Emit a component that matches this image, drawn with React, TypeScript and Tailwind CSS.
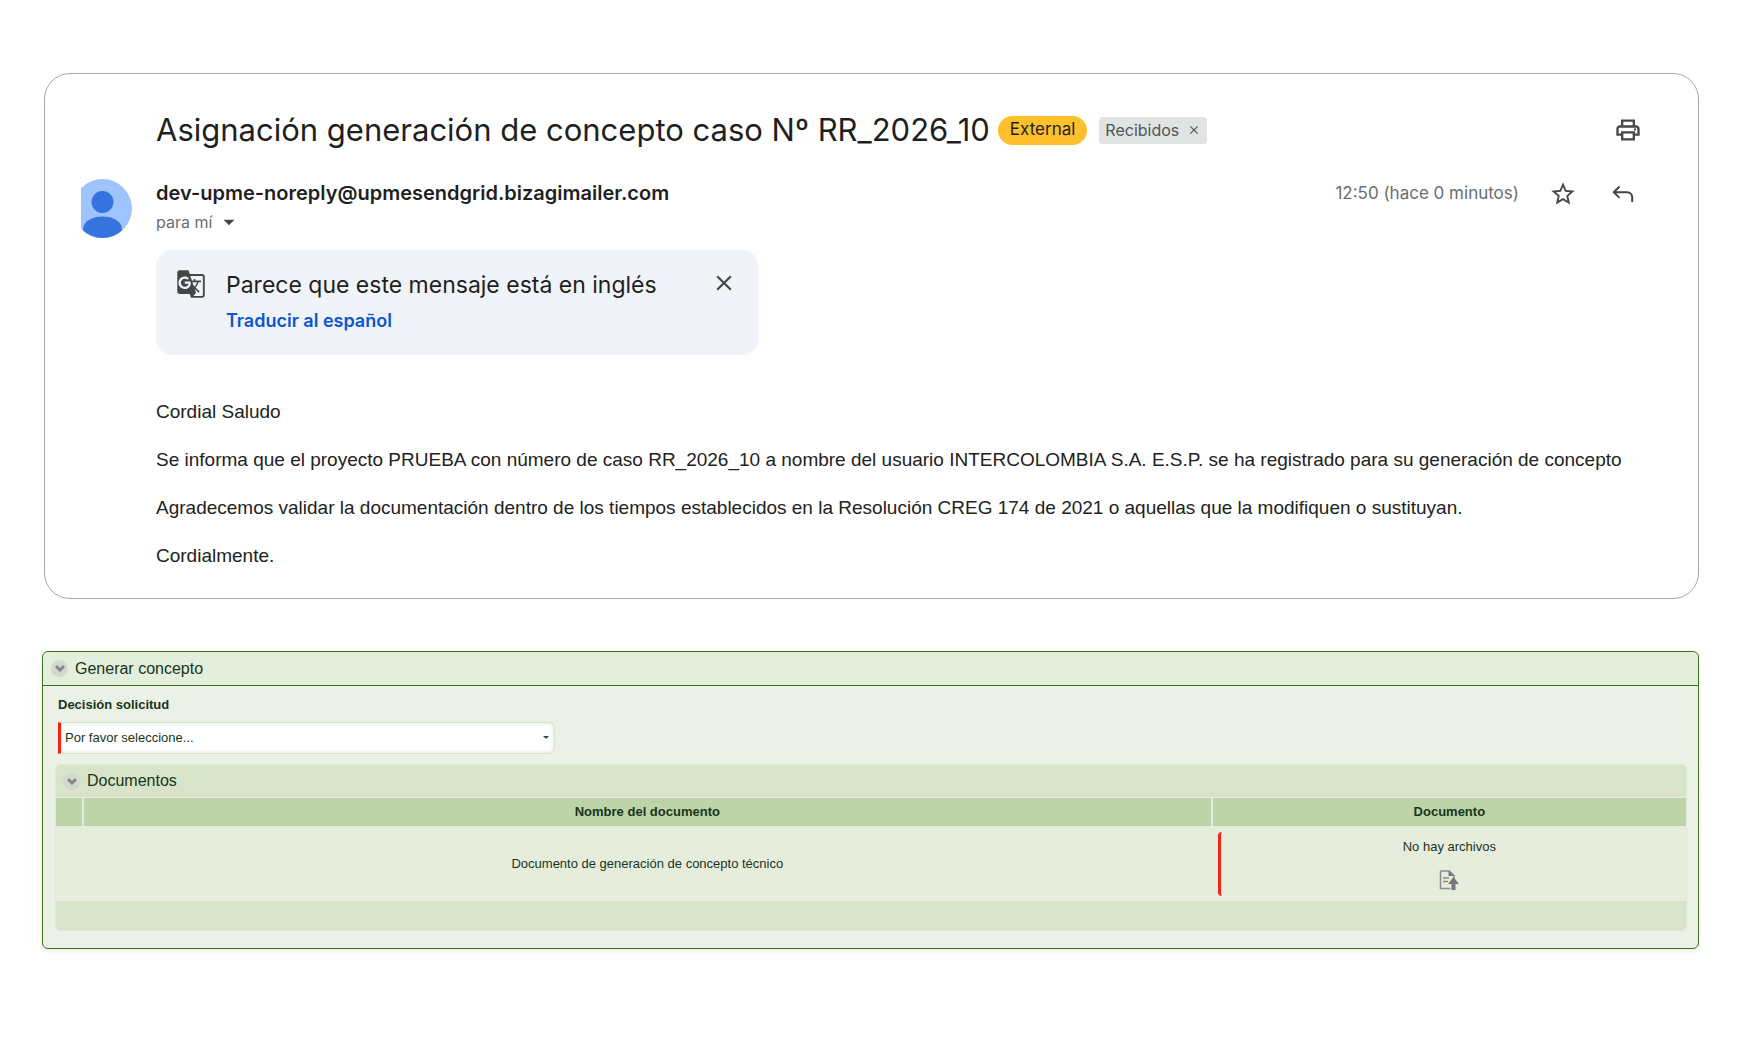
import type { ReactNode } from "react";
import { MdArrowDropDown, MdClose, MdGTranslate, MdOutlinePrint, MdStarBorder } from "react-icons/md";

function ReplyIcon() {
  return (
    <svg viewBox="0 0 22 18" className="h-[18px] w-[22px]" fill="none" stroke="#444746" strokeWidth="2">
      <path d="M7.5 1.5 1.8 7.2l5.7 5.7M2 7.2h13.2a5 5 0 0 1 5 5V17" />
    </svg>
  );
}

function UploadIcon() {
  return (
    <svg viewBox="0 0 20 20" className="h-5 w-5" fill="none">
      <path d="M1.5 1h9l4.5 4.5V9M1.5 1v17.5h10" stroke="#8b8b8b" strokeWidth="1.5" />
      <path d="M9.5 1v5H15z" fill="#777" />
      <path d="M4 8h6M4 11.5h5" stroke="#8b8b8b" strokeWidth="1.5" />
      <path d="M14.5 7 20 14h-3.5v6h-4v-6H9z" fill="#777" />
    </svg>
  );
}

function Avatar() {
  return (
    <svg viewBox="8 0 51 59" className="h-[59px] w-[51px]" role="img" aria-label="Remitente">
      <clipPath id="avatar">
        <circle cx="29.5" cy="29.5" r="29.5" />
      </clipPath>
      <g clipPath="url(#avatar)">
        <rect width="59" height="59" fill="#9fc3fd" />
        <circle cx="29.5" cy="23" r="11" fill="#3574df" />
        <path d="M10 51c0-9 9-13.5 19.5-13.5S49 42 49 51v8H10z" fill="#3574df" />
      </g>
    </svg>
  );
}

function CollapseButton({ label }: { label: string }) {
  return (
    <button type="button" aria-label={label} className="flex h-[17px] w-[17px] items-center justify-center rounded-full bg-[#d3d9cf]">
      <svg viewBox="0 0 10 7" className="h-[7px] w-2.5" fill="none" stroke="#858885" strokeWidth="3">
        <path d="M1 1.2 5 5l4-3.8" />
      </svg>
    </button>
  );
}

function IconButton({ label, children }: { label: string; children: ReactNode }) {
  return (
    <button type="button" aria-label={label} className="flex h-7 w-7 items-center justify-center text-[#444746]">
      {children}
    </button>
  );
}

function MailCard() {
  return (
    <article className="ml-0.5 rounded-[26px] border border-[#a9a9a9] px-9 pt-[38px] pb-7 font-['Inter',sans-serif] text-[#1f1f1f]">
      <header className="flex h-9 items-center pl-[75px]">
        <h1 className="text-[31px] leading-9 whitespace-nowrap">Asignación generación de concepto caso Nº RR_2026_10</h1>
        <span className="ml-2 flex h-[29px] items-center rounded-full bg-[#ffc02e] px-3 text-[17px]">External</span>
        <span className="ml-3 flex h-[27px] items-center gap-2 rounded bg-[#e1e4e3] px-1.5 text-base text-[#50545a]">
          Recibidos
          <button type="button" aria-label="Quitar etiqueta">
            <MdClose size={14} />
          </button>
        </span>
        <div className="mr-5 ml-auto">
          <IconButton label="Imprimir">
            <MdOutlinePrint size={28} />
          </IconButton>
        </div>
      </header>

      <div className="mt-[31px] flex items-start gap-6">
        <Avatar />
        <div className="flex-1">
          <p className="text-xl leading-7 font-semibold">dev-upme-noreply@upmesendgrid.bizagimailer.com</p>
          <button type="button" className="flex items-center gap-1 text-base leading-[30px] text-[#6b6e72]">
            para mí
            <MdArrowDropDown size={26} color="#444746" />
          </button>
        </div>
        <div className="mr-[25px] flex h-[30px] items-center text-[#6b6e72]">
          <time className="text-[17px]">12:50 (hace 0 minutos)</time>
          <div className="ml-[30px] flex gap-8">
            <IconButton label="Destacar">
              <MdStarBorder size={28} />
            </IconButton>
            <IconButton label="Responder">
              <ReplyIcon />
            </IconButton>
          </div>
        </div>
      </div>

      <div className="ml-[75px]">
        <section className="mt-3 flex h-[105px] w-[602px] gap-5 rounded-2xl bg-[#f0f3f8] px-5 pt-[19px]">
          <MdGTranslate size={30} color="#444746" />
          <div className="flex-1">
            <p className="text-[23px] leading-8">Parece que este mensaje está en inglés</p>
            <a href="#traducir" className="text-[18px] leading-10 font-semibold text-[#0b57d0]">
              Traducir al español
            </a>
          </div>
          <IconButton label="Cerrar">
            <MdClose size={26} />
          </IconButton>
        </section>

        <div className="mt-[43px] flex flex-col gap-5 overflow-hidden font-['Liberation_Sans',Arial,sans-serif] text-[19px] leading-7 whitespace-nowrap text-[#222]">
          <p>Cordial Saludo</p>
          <p>
            Se informa que el proyecto PRUEBA con número de caso RR_2026_10 a nombre del usuario INTERCOLOMBIA S.A. E.S.P. se ha
            registrado para su generación de concepto
          </p>
          <p>
            Agradecemos validar la documentación dentro de los tiempos establecidos en la Resolución CREG 174 de 2021 o aquellas que
            la modifiquen o sustituyan.
          </p>
          <p>Cordialmente.</p>
        </div>
      </div>
    </article>
  );
}

function DocumentsTable() {
  return (
    <section className="mt-2.5 overflow-hidden rounded-md border border-[#dfead6] bg-[#d7e4c9]">
      <h3 className="flex h-8 items-center gap-[7px] pl-[7px] text-base">
        <CollapseButton label="Contraer documentos" />
        Documentos
      </h3>
      <table className="w-full table-fixed border-collapse text-center text-[13px]">
        <colgroup>
          <col className="w-[27px]" />
          <col />
          <col className="w-[29.1%]" />
        </colgroup>
        <thead>
          <tr className="h-[29px] border-y border-[#e3ecdb] bg-[#bcd4a8]">
            <th className="border-r-2 border-[#e3ecdb]" />
            <th className="border-r-2 border-[#e3ecdb]">Nombre del documento</th>
            <th>Documento</th>
          </tr>
        </thead>
        <tbody>
          <tr className="bg-[#e7eddd]">
            <td />
            <td>Documento de generación de concepto técnico</td>
            <td className="py-[5px] pl-1.5">
              <div className="flex h-16 flex-col items-center justify-between rounded-sm border-l-3 border-[#fb2014] pt-[5px] pr-2 pb-1.5">
                <span>No hay archivos</span>
                <button type="button" aria-label="Subir archivo">
                  <UploadIcon />
                </button>
              </div>
            </td>
          </tr>
        </tbody>
      </table>
      <div className="h-[29px]" />
    </section>
  );
}

function ConceptForm() {
  return (
    <form className="rounded-md border border-[#3f6f22] bg-[#ebf1e6] font-['Liberation_Sans',Arial,sans-serif] text-[#17351a] shadow-[0_2px_4px_#e3f0da]">
      <h2 className="flex h-[34px] items-center gap-[7px] rounded-t-md border-b border-[#3f6f22] bg-[#e3eedd] pl-2 text-base">
        <CollapseButton label="Contraer sección" />
        Generar concepto
      </h2>
      <div className="pt-2 pr-[11px] pb-[17px] pl-3">
        <label htmlFor="decision" className="ml-[3px] block text-[13px] leading-[22px] font-bold">
          Decisión solicitud
        </label>
        <div className="relative mt-1.5 ml-[3px] h-8 w-[497px]">
          <select
            id="decision"
            className="h-full w-full appearance-none rounded-r-md border border-l-3 border-[#d7e4c9] border-l-[#fb2014] bg-white pl-1 text-[13px] shadow-[inset_0_0_4px_#ddd]"
          >
            <option>Por favor seleccione...</option>
          </select>
          <svg viewBox="0 0 6 3" className="pointer-events-none absolute top-3.5 right-1.5 h-[3px] w-1.5" fill="#444">
            <path d="M0 0h6L3 3z" />
          </svg>
        </div>
        <DocumentsTable />
      </div>
    </form>
  );
}

export default function App() {
  return (
    <main className="flex min-h-screen flex-col gap-[52px] bg-white pt-[73px] pr-[43px] pb-10 pl-[42px]">
      <MailCard />
      <ConceptForm />
    </main>
  );
}
